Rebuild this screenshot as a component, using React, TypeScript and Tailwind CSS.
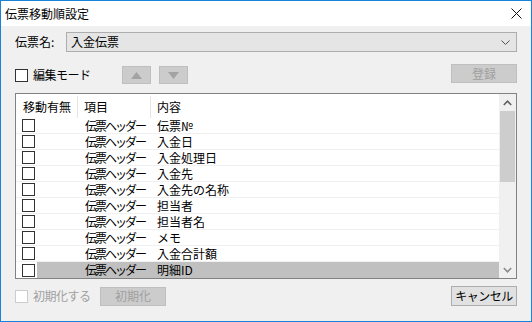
import React from "react";

const rows = [
  { item: "伝票ヘッダー", content: "伝票№" },
  { item: "伝票ヘッダー", content: "入金日" },
  { item: "伝票ヘッダー", content: "入金処理日" },
  { item: "伝票ヘッダー", content: "入金先" },
  { item: "伝票ヘッダー", content: "入金先の名称" },
  { item: "伝票ヘッダー", content: "担当者" },
  { item: "伝票ヘッダー", content: "担当者名" },
  { item: "伝票ヘッダー", content: "メモ" },
  { item: "伝票ヘッダー", content: "入金合計額" },
  { item: "伝票ヘッダー", content: "明細ID" },
];

function Box({ disabled }: { disabled?: boolean }) {
  return (
    <div
      className={
        "w-[13px] h-[13px] shrink-0 border bg-white " +
        (disabled ? "border-[#cccccc]" : "border-[#333333]")
      }
    />
  );
}

export default function App() {
  return (
    <div
      className="w-[532px] h-[322px] flex flex-col bg-[#f0f0f0] border border-[#1883d7] text-[12px] leading-none text-black whitespace-nowrap"
      style={{ fontFamily: '"Noto Sans CJK JP", "Liberation Sans", sans-serif' }}
    >
      {/* title bar */}
      <div className="h-[25px] shrink-0 bg-white flex items-center justify-between pl-[4px] pr-[9px]">
        <span className="text-[12px]">伝票移動順設定</span>
        <svg width="11" height="11" viewBox="0 0 11 11">
          <path d="M0.5 0.5 L10.5 10.5 M10.5 0.5 L0.5 10.5" stroke="#111" strokeWidth="1" />
        </svg>
      </div>

      <div className="flex-1 flex flex-col px-[14px]">
        {/* slip name */}
        <div className="mt-[6px] h-[20px] flex items-center">
          <span className="w-[51px] shrink-0">伝票名:</span>
          <div className="flex-1 h-[20px] flex items-center justify-between bg-[#e5e5e5] border border-[#adadad] pl-[4px] pr-[6px]">
            <span>入金伝票</span>
            <svg width="9" height="5" viewBox="0 0 9 5">
              <path d="M0.5 0.5 L4.5 4.5 L8.5 0.5" stroke="#505050" fill="none" strokeWidth="1" />
            </svg>
          </div>
        </div>

        {/* edit mode row */}
        <div className="mt-[13px] h-[20px] flex items-center">
          <div className="flex items-center gap-[5px] w-[107px]">
            <Box />
            <span className="tracking-[-0.5px]">編集モード</span>
          </div>
          <div className="w-[29px] h-[18px] flex items-center justify-center bg-[#cccccc] border border-[#bfbfbf]">
            <svg width="11" height="7" viewBox="0 0 11 7">
              <path d="M5.5 0 L11 7 L0 7 Z" fill="#a3a3a3" />
            </svg>
          </div>
          <div className="ml-[8px] w-[29px] h-[18px] flex items-center justify-center bg-[#cccccc] border border-[#bfbfbf]">
            <svg width="11" height="7" viewBox="0 0 11 7">
              <path d="M0 0 L11 0 L5.5 7 Z" fill="#a3a3a3" />
            </svg>
          </div>
          <div className="ml-auto w-[66px] h-[19px] -mt-[3px] flex items-center justify-center bg-[#cccccc] border border-[#bfbfbf] text-[#a0a0a0]">
            登録
          </div>
        </div>

        {/* list */}
        <div className="mt-[8px] h-[186px] flex bg-white border border-[#828282]">
          <div className="flex-1 flex flex-col">
            <div className="h-[24px] flex items-center shrink-0 pt-[2px]">
              <div className="w-[62px] h-full flex items-center pl-[7px] border-r border-[#e5e5e5]">移動有無</div>
              <div className="w-[73px] h-full flex items-center pl-[6px] border-r border-[#e5e5e5]">項目</div>
              <div className="flex-1 h-full flex items-center pl-[6px]">内容</div>
            </div>
            {rows.map((r, i) => {
              const sel = i === rows.length - 1;
              return (
                <div
                  key={i}
                  className={
                    "h-[16px] flex items-center " +
                    (sel ? "bg-[#c0c0c0]" : "border-b border-[#f0f0f0]")
                  }
                >
                  <div className="w-[21px] h-full flex items-center pl-[6px] bg-white">
                    <Box />
                  </div>
                  <div className="w-[41px]" />
                  <div className="w-[73px] pl-[7px] tracking-[-2px]">{r.item}</div>
                  <div className="flex-1 pl-[6px]">{r.content}</div>
                </div>
              );
            })}
          </div>
          {/* scrollbar */}
          <div className="w-[17px] flex flex-col bg-[#f0f0f0]">
            <div className="h-[17px] flex items-center justify-center">
              <svg width="9" height="6" viewBox="0 0 9 6">
                <path d="M0.8 5 L4.5 1.2 L8.2 5" stroke="#606060" fill="none" strokeWidth="1.6" />
              </svg>
            </div>
            <div className="h-[71px] mx-[1px] bg-[#cdcdcd]" />
            <div className="flex-1" />
            <div className="h-[17px] flex items-center justify-center">
              <svg width="9" height="6" viewBox="0 0 9 6">
                <path d="M0.8 1 L4.5 4.8 L8.2 1" stroke="#8a8a8a" fill="none" strokeWidth="1.6" />
              </svg>
            </div>
          </div>
        </div>

        {/* bottom row */}
        <div className="mt-[7px] h-[20px] flex items-center">
          <div className="flex items-center gap-[5px] w-[85px] text-[#a0a0a0]">
            <Box disabled />
            <span className="tracking-[-0.5px]">初期化する</span>
          </div>
          <div className="w-[66px] h-[19px] flex items-center justify-center bg-[#cccccc] border border-[#bfbfbf] text-[#a0a0a0]">
            初期化
          </div>
          <div className="ml-auto w-[66px] h-[20px] flex items-center justify-center bg-[#e1e1e1] border border-[#adadad] tracking-[-0.5px]">
            キャンセル
          </div>
        </div>
      </div>
    </div>
  );
}
